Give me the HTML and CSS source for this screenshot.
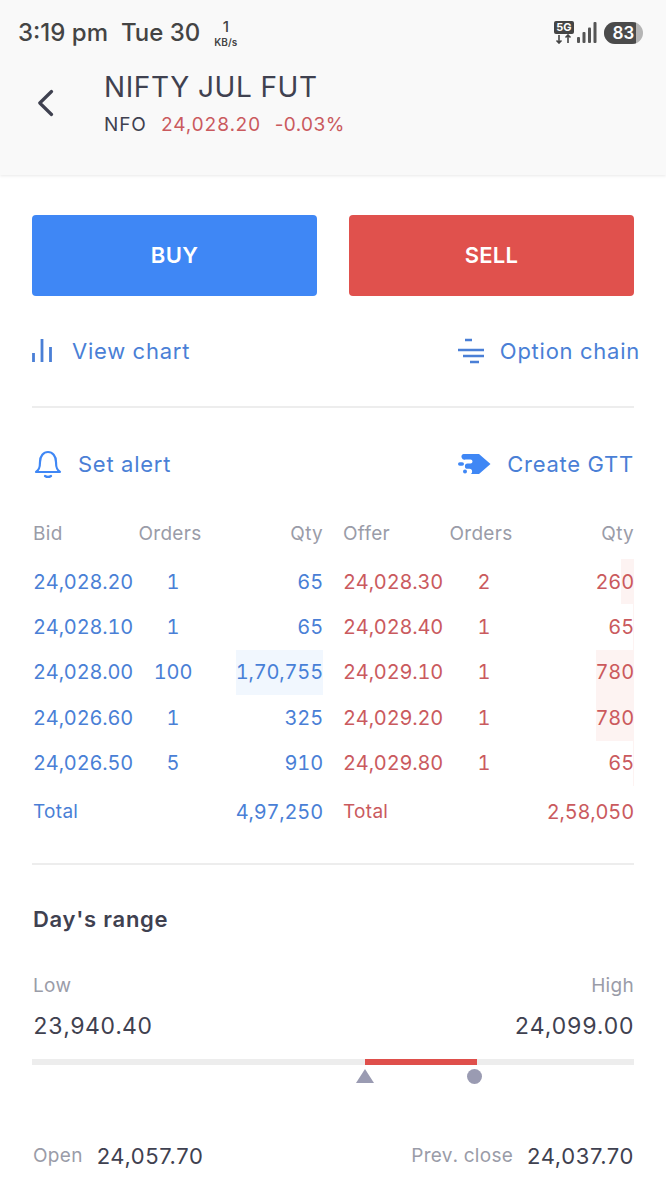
FILE: index.html
```html
<!DOCTYPE html>
<html lang="en">
<head>
<meta charset="utf-8">
<title>NIFTY JUL FUT</title>
<link rel="stylesheet" href="styles.css">
</head>
<body>
<header class="header">
  <div class="status">
    <div class="status-left">
      <span class="clock">3:19 pm</span>
      <span class="clock">Tue 30</span>
      <span class="speed"><b>1</b><i>KB/s</i></span>
    </div>
    <div class="status-right">
      <div class="net">
        <span class="net-badge">5G</span>
        <svg width="20" height="10" viewBox="0 0 20 10"><path d="M5 1v8M2.500 6.500 5 9l2.500-2.500M14 9V1M11.500 3.500 14 1l2.500 2.500" fill="none" stroke="#444" stroke-width="1.600"/></svg>
      </div>
      <svg class="bars" width="20" height="21" viewBox="0 0 20 21"><rect x="0" y="15" width="3" height="6" rx="1" fill="#555"/><rect x="5.500" y="10" width="3" height="11" rx="1" fill="#555"/><rect x="11" y="5.500" width="3" height="15.500" rx="1" fill="#555"/><rect x="16.500" y="0" width="3" height="21" rx="1" fill="#555"/></svg>
      <span class="battery"><span class="battery-fill">83</span></span>
    </div>
  </div>
  <div class="title-row">
    <svg class="back" width="18" height="28" viewBox="0 0 18 28"><path d="M13.500 2.500 1.800 14l11.700 11.500" fill="none" stroke="#3f4150" stroke-width="3.200" stroke-linecap="round" stroke-linejoin="round"/></svg>
    <div class="title-block">
      <h1 class="title">NIFTY JUL FUT</h1>
      <div class="sub"><span class="exch">NFO</span><span class="down">24,028.20</span><span class="down pct">-0.03%</span></div>
    </div>
  </div>
</header>

<main class="main">
  <div class="btns">
    <button class="btn buy">BUY</button>
    <button class="btn sell">SELL</button>
  </div>

  <div class="links first">
    <a class="link"><svg class="chart-ico" width="21" height="24" viewBox="0 0 21 24"><path d="M1.500 14v9M10 0v23M18.500 8v15" stroke="#4a7fd6" stroke-width="2.800" fill="none"/></svg>View chart</a>
    <a class="link"><svg width="28" height="26" viewBox="0 0 28 26"><path d="M8 2h7M1 12h26M6 18h21M13 24h9" stroke="#4a7fd6" stroke-width="2.400" fill="none"/></svg>Option chain</a>
  </div>
  <hr class="rule">
  <div class="links second">
    <a class="link wide"><svg width="28" height="30" viewBox="0 0 28 30"><path d="M2 23c3-2 4-4 4-10 0-6 3.500-10 8-10s8 4 8 10c0 6 1 8 4 10z" fill="none" stroke="#3f87f5" stroke-width="2.200" stroke-linejoin="round"/><path d="M11 27c2 1.300 4 1.300 6 0" fill="none" stroke="#3f87f5" stroke-width="2.200" stroke-linecap="round"/></svg>Set alert</a>
    <a class="link wide"><svg width="33" height="22" viewBox="0 0 33 22"><path d="M5.500 1H21l11.500 10L21 21H11.500a2.600 2.600 0 0 0 0-5.200H9.500a2.600 2.600 0 0 1 0-5.200h3a2 2 0 0 0 0-4H7.500A2.800 2.800 0 0 1 5.500 1z" fill="#3f87f5"/><rect x="0" y="9.200" width="6" height="3.600" rx="1.800" fill="#3f87f5"/><circle cx="7" cy="18.500" r="2" fill="#3f87f5"/></svg>Create GTT</a>
  </div>

  <div class="depth">
    <div class="side bid">
      <div class="row head"><span>Bid</span><span class="ord">Orders</span><span class="qty">Qty</span></div>
      <div class="row data"><span>24,028.20</span><span class="ord">1</span><span class="qty">65</span></div>
      <div class="row data"><span>24,028.10</span><span class="ord">1</span><span class="qty">65</span></div>
      <div class="row data"><span>24,028.00</span><span class="ord">100</span><span class="qty">1,70,755<i class="bar" style="width:87px"></i></span></div>
      <div class="row data"><span>24,026.60</span><span class="ord">1</span><span class="qty">325</span></div>
      <div class="row data"><span>24,026.50</span><span class="ord">5</span><span class="qty">910</span></div>
      <div class="row total"><span>Total</span><span class="qty">4,97,250</span></div>
    </div>
    <div class="side ask">
      <div class="row head"><span>Offer</span><span class="ord">Orders</span><span class="qty">Qty</span></div>
      <div class="row data"><span>24,028.30</span><span class="ord">2</span><span class="qty">260<i class="bar" style="width:13px"></i></span></div>
      <div class="row data"><span>24,028.40</span><span class="ord">1</span><span class="qty">65<i class="bar" style="width:1px"></i></span></div>
      <div class="row data"><span>24,029.10</span><span class="ord">1</span><span class="qty">780<i class="bar" style="width:38px"></i></span></div>
      <div class="row data"><span>24,029.20</span><span class="ord">1</span><span class="qty">780<i class="bar" style="width:38px"></i></span></div>
      <div class="row data"><span>24,029.80</span><span class="ord">1</span><span class="qty">65<i class="bar" style="width:1px"></i></span></div>
      <div class="row total"><span>Total</span><span class="qty">2,58,050</span></div>
    </div>
  </div>
  <hr class="rule range-rule">

  <h2 class="range-title">Day's range</h2>
  <div class="range-labels"><span>Low</span><span>High</span></div>
  <div class="range-values"><span>23,940.40</span><span>24,099.00</span></div>
  <div class="track">
    <div class="track-fill"></div>
    <svg class="tri" width="18" height="14" viewBox="0 0 18 14"><path d="M9 0 18 14H0z" fill="#9a9bb2"/></svg>
    <i class="dot"></i>
  </div>
  <div class="ohlc">
    <div class="pair"><span class="lbl">Open</span><span class="val">24,057.70</span></div>
    <div class="pair"><span class="lbl">Prev. close</span><span class="val">24,037.70</span></div>
  </div>
</main>
</body>
</html>
```

FILE: styles.css
```css
* { box-sizing: border-box; }
html, body { margin: 0; padding: 0; }
body {
  width: 666px;
  height: 1200px;
  overflow: hidden;
  background: #fff;
  font-family: Inter, "Liberation Sans", sans-serif;
  font-variant-numeric: tabular-nums;
  color: #3f4150;
}
.header {
  height: 175px;
  background: #f9f9f9;
  box-shadow: 0 1px 3px rgba(0,0,0,.09);
  padding: 18px 23px 0 18px;
}
.status { display: flex; justify-content: space-between; align-items: flex-start; height: 30px; }
.status-left { display: flex; align-items: center; gap: 13px; height: 29px; font-variant-numeric: normal; }
.clock { font-size: 24px; font-weight: 500; color: #444; white-space: nowrap; }
.speed { display: flex; flex-direction: column; align-items: center; margin-left: 1px; color: #444; line-height: 1; }
.speed b { font-size: 15px; font-weight: 500; line-height: 18px; }
.speed i { font-style: normal; font-size: 10px; font-weight: 600; line-height: 12px; }
.status-right { display: flex; align-items: center; gap: 3px; margin-top: 3px; }
.net { display: flex; flex-direction: column; width: 20px; }
.net-badge { display: block; height: 13px; border-radius: 2px; background: #444; color: #fff; font-size: 11px; font-weight: 700; line-height: 13px; text-align: center; font-variant-numeric: normal; }
.battery { display: block; width: 39px; height: 22px; margin-left: 4px; border-radius: 11px; background: #b5b5b5; overflow: hidden; }
.battery-fill { display: flex; align-items: center; justify-content: center; width: 32px; height: 22px; background: #4b4b4b; color: #fff; font-size: 17px; font-weight: 600; padding-left: 7px; }
.title-row { display: flex; margin-top: 22px; padding-left: 20px; }
.back { margin-top: 19px; }
.title-block { margin-left: 48px; }
.title { margin: 0; font-size: 28px; font-weight: 400; line-height: 34px; letter-spacing: .6px; color: #3f4150; white-space: nowrap; }
.sub { display: flex; gap: 14px; margin-top: 9px; font-size: 19px; line-height: 24px; letter-spacing: .4px; }
.exch { color: #3f4150; letter-spacing: .85px; }
.down { color: #ca5a5e; }
.pct { font-variant-numeric: normal; }
.main { padding: 40px 32px 0; }
.btns { display: flex; gap: 32px; }
.btn { flex: 1; height: 81px; padding: 0 0 2px; border: 0; border-radius: 4px; color: #fff; font-family: inherit; font-size: 22px; font-weight: 600; letter-spacing: .3px; }
.buy { background: #3f87f5; }
.sell { background: #e0514d; }
.links { display: flex; justify-content: space-between; align-items: center; }
.links.first { height: 32px; margin-top: 39px; margin-right: -6px; }
.links.second { height: 32px; margin-top: 40px; }
.link { display: flex; align-items: center; gap: 15px; font-size: 22px; letter-spacing: .75px; color: #4a7fd6; white-space: nowrap; }
.chart-ico { margin-right: 4px; }
.link.wide { gap: 16px; padding-left: 2px; }
.rule { margin: 0; border: 0; height: 2px; background: #ededed; }
.first + .rule { margin-top: 39px; }
.depth { display: flex; gap: 20px; margin-top: 33px; margin-left: 1px; }
.side { flex: 0 0 290px; }
.side.ask { flex: 1; }
.row { display: grid; grid-template-columns: 100px 80px 1fr; align-items: center; white-space: nowrap; font-size: 20px; letter-spacing: -.15px; }
.ask .row { grid-template-columns: 101px 80px 1fr; }
.head { height: 40px; margin-bottom: 6px; font-size: 19px; letter-spacing: .3px; color: #9a9ca8; }
.head .ord { padding-right: 6px; }
.row.head { letter-spacing: .3px; }
.data { height: 45.400px; }
.row.total { grid-template-columns: 1fr auto; height: 50px; padding-top: 2px; }
.total span:first-child { font-size: 19px; letter-spacing: .3px; }
.ord { text-align: center; }
.qty { position: relative; align-self: stretch; display: flex; align-items: center; justify-content: flex-end; }
.bar { position: absolute; top: 0; right: 0; bottom: 0; }
.bid .data, .bid .total { color: #4a7fd6; }
.ask .data, .ask .total { color: #ca5a5e; }
.bid .bar { background: rgba(63,135,245,.07); }
.ask .bar { background: rgba(224,81,77,.07); }
.range-rule { margin-top: 27px; }
.range-title { margin: 39px 0 0 1px; font-size: 22px; font-weight: 600; line-height: 30px; color: #3f4150; letter-spacing: .7px; }
.range-labels { display: flex; justify-content: space-between; margin: 40px 0 0 1px; font-size: 19px; line-height: 24px; color: #9a9ca8; letter-spacing: .3px; }
.range-values { display: flex; justify-content: space-between; margin: 13px 0 0 1px; font-size: 23px; line-height: 30px; letter-spacing: .3px; color: #3f4150; }
.track { position: relative; height: 6px; margin-top: 18px; background: #ededed; }
.track-fill { position: absolute; left: 333px; width: 112px; top: 0; bottom: 0; background: #df4f4b; }
.tri { position: absolute; left: 324px; top: 10px; }
.dot { position: absolute; left: 435px; top: 10px; width: 15px; height: 15px; border-radius: 50%; background: #9a9bb2; }
.ohlc { display: flex; justify-content: space-between; margin: 78px 0 0 1px; }
.pair { display: flex; align-items: center; gap: 14px; white-space: nowrap; }
.lbl { font-size: 19px; color: #9a9ca8; letter-spacing: .3px; }
.val { font-size: 22px; letter-spacing: .6px; color: #3f4150; font-variant-numeric: normal; }
```
